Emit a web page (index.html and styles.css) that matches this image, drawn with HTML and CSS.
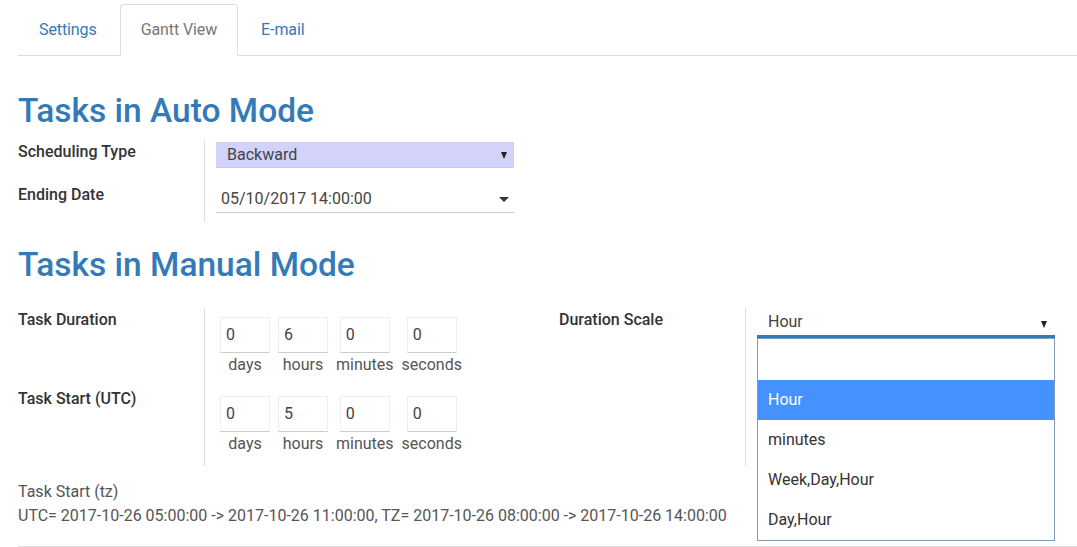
FILE: index.html
```html
<!DOCTYPE html>
<html>
<head>
<meta charset="utf-8">
<link rel="stylesheet" href="styles.css">
</head>
<body>
<div class="page">
  <ul class="tabs">
    <li class="tab"><a>Settings</a></li>
    <li class="tab active"><a>Gantt View</a></li>
    <li class="tab"><a>E-mail</a></li>
  </ul>

  <h1 class="title">Tasks in Auto Mode</h1>
  <div class="grid auto">
    <div class="lbl r1">Scheduling Type</div>
    <div class="val r1">
      <div class="select lavender"><span>Backward</span><i class="tri"></i></div>
    </div>
    <div class="lbl r2">Ending Date</div>
    <div class="val r2">
      <div class="datefield"><span>05/10/2017 14:00:00</span><i class="caret"></i></div>
    </div>
  </div>

  <h1 class="title manual">Tasks in Manual Mode</h1>
  <div class="manual-wrap">
    <div class="grid left">
      <div class="lbl m">Task Duration</div>
      <div class="val m">
        <div class="dur">
          <div class="cell"><div class="box">0</div><span>days</span></div>
          <div class="cell"><div class="box">6</div><span>hours</span></div>
          <div class="cell"><div class="box">0</div><span>minutes</span></div>
          <div class="cell"><div class="box">0</div><span>seconds</span></div>
        </div>
      </div>
      <div class="lbl m">Task Start (UTC)</div>
      <div class="val m">
        <div class="dur">
          <div class="cell"><div class="box">0</div><span>days</span></div>
          <div class="cell"><div class="box">5</div><span>hours</span></div>
          <div class="cell"><div class="box">0</div><span>minutes</span></div>
          <div class="cell"><div class="box">0</div><span>seconds</span></div>
        </div>
      </div>
    </div>
    <div class="grid right">
      <div class="lbl m">Duration Scale</div>
      <div class="val ds">
        <div class="select scale"><span>Hour</span><i class="tri"></i></div>
        <ul class="options">
          <li class="opt empty"></li>
          <li class="opt sel">Hour</li>
          <li class="opt">minutes</li>
          <li class="opt">Week,Day,Hour</li>
          <li class="opt">Day,Hour</li>
        </ul>
      </div>
    </div>
  </div>

  <div class="tz">
    <div>Task Start (tz)</div>
    <div>UTC= 2017-10-26 05:00:00 -&gt; 2017-10-26 11:00:00, TZ= 2017-10-26 08:00:00 -&gt; 2017-10-26 14:00:00</div>
  </div>
  <div class="bottom-line"></div>
</div>
</body>
</html>
```

FILE: styles.css
```css
* { box-sizing: border-box; }
html, body { margin: 0; padding: 0; background: #fff; }
body {
  font-family: Roboto, "Liberation Sans", Arial, sans-serif;
  font-size: 16px;
  line-height: 20px;
  color: #333;
  overflow: hidden;
}
.page { padding-left: 18px; }

.tabs {
  list-style: none;
  margin: 4px 0 0 0;
  padding: 0;
  display: flex;
  border-bottom: 1px solid #ddd;
}
.tab {
  margin-right: 2px;
  margin-bottom: -1px;
}
.tab a {
  display: block;
  padding: 15px 20px 15px 20px;
  border: 1px solid transparent;
  border-radius: 4px 4px 0 0;
  color: #337ab7;
  line-height: 20px;
  letter-spacing: -0.1px;
}
.tab.active a {
  color: #777;
  border-color: #ddd;
  border-bottom-color: #fff;
  background: #fff;
}

.title {
  margin: 37px 0 12px 0;
  font-size: 33.5px;
  line-height: 36px;
  font-weight: 500;
  color: #337ab7;
}
.title.manual { margin: 25px 0 25px 0; }

.grid {
  display: grid;
  grid-template-columns: 187px 309px;
}
.lbl {
  font-weight: 500;
  color: #333;
  border-right: 1px solid #ddd;
}
.val { padding-left: 11px; }

.auto .lbl.r1 { padding-top: 1px; }
.auto .val.r1 { padding-top: 1px; padding-bottom: 14px; }
.auto .lbl.r2 { padding-top: 3px; }
.auto .val.r2 { padding-top: 3px; padding-bottom: 9px; }

.select {
  position: relative;
  display: flex;
  align-items: center;
  color: #444;
}
.select.lavender {
  height: 26px;
  background: #d2d2fb;
  border-bottom: 1px solid #c8c8e0;
  padding-left: 11px;
}
.tri {
  position: absolute;
  right: 7px;
  top: 50%;
  margin-top: -3px;
  width: 0; height: 0;
  border-left: 3.5px solid transparent;
  border-right: 3.5px solid transparent;
  border-top: 7px solid #222;
}
.datefield {
  position: relative;
  height: 28px;
  padding: 4px 5px;
  border-bottom: 1px solid #ccc;
  color: #444;
}
.caret {
  position: absolute;
  right: 5px;
  top: 12px;
  width: 0; height: 0;
  border-left: 5px solid transparent;
  border-right: 5px solid transparent;
  border-top: 5px solid #333;
}

.manual-wrap { display: flex; }
.grid.left { flex: 0 0 541px; grid-template-columns: 187px 1fr; }
.grid.right { flex: 0 0 496px; }
.lbl.m { padding-top: 2px; }
.val.m { padding: 9px 0 12px 15px; }

.dur { display: flex; gap: 8px; align-items: flex-start; }
.cell {
  display: flex;
  flex-direction: column;
  align-items: center;
  min-width: 50px;
}
.box {
  width: 50px;
  height: 36px;
  border: 1px solid #eee;
  border-bottom-color: #ccc;
  padding: 7px 5px;
  color: #444;
}
.cell span {
  margin-top: 2px;
  color: #555;
  line-height: 20px;
}

.val.ds { position: relative; padding-bottom: 9px; }
.select.scale {
  height: 30px;
  padding: 4px 11px 0 11px;
  align-items: flex-start;
  border-bottom: 3px solid #337ab7;
}
.select.scale .tri { right: 8px; top: 13px; margin-top: 0; }

.options {
  position: absolute;
  left: 11px;
  top: 30px;
  width: 298px;
  margin: 0;
  padding: 0;
  list-style: none;
  background: #fff;
  border: 1px solid #7f9db9;
  z-index: 5;
}
.opt {
  height: 40px;
  line-height: 40px;
  padding-left: 10px;
  color: #333;
}
.opt.empty { height: 41px; }
.opt.sel { background: #4592ff; color: #fff; }

.tz {
  margin-top: 14px;
  color: #555;
  line-height: 24px;
}
.bottom-line {
  margin-top: 18px;
  border-top: 1px solid #ddd;
}
```
